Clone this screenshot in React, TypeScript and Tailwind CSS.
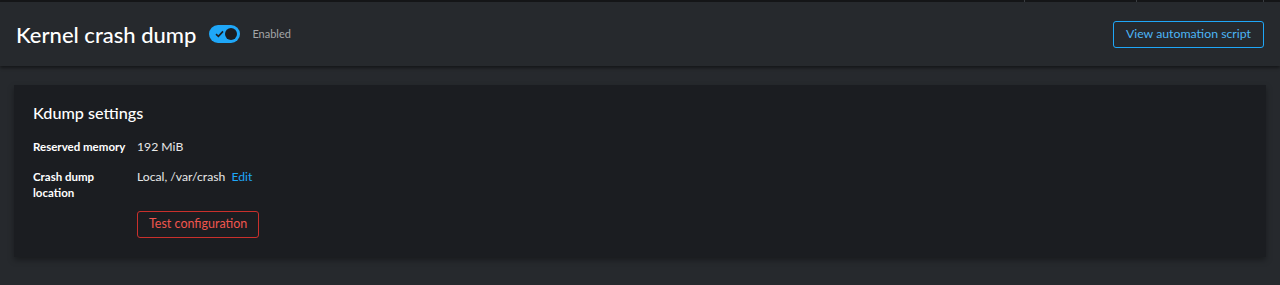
import React from "react";

const font = { fontFamily: 'Lato, "Liberation Sans", sans-serif' };

const Toggle = () => (
  <div className="relative h-[18px] w-[31px] rounded-full bg-[#1fa7f8]">
    <svg className="absolute left-[6px] top-[5px]" width="9" height="8" viewBox="0 0 9 8">
      <path d="M1 4.2 L3.4 6.4 L8 1.4" fill="none" stroke="#1b1d21" strokeWidth="1.6" />
    </svg>
    <div className="absolute right-[3px] top-[3px] h-[12px] w-[12px] rounded-full bg-[#1b1d21]" />
  </div>
);

const TopStrip = () => (
  <div className="flex h-[2px] bg-[#151618]">
    <div className="flex-1" />
    <div className="w-px bg-[#3a3d41]" />
    <div className="w-[111px]" />
    <div className="w-px bg-[#3a3d41]" />
    <div className="w-[126px]" />
    <div className="w-px bg-[#3a3d41]" />
    <div className="w-[16px]" />
  </div>
);

export default function App() {
  return (
    <div className="min-h-[285px] bg-[#26292d] text-white" style={font}>
      <TopStrip />
      <header className="flex h-[64px] items-center justify-between bg-[#26292d] pl-4 pr-4 shadow-[0_2px_3px_rgba(0,0,0,0.45)]">
        <div className="flex items-center">
          <h1 className="text-[22px] font-medium text-white">Kernel crash dump</h1>
          <div className="ml-[13px]">
            <Toggle />
          </div>
          <span className="ml-3 text-[11px] text-[#a4a6a8]">Enabled</span>
        </div>
        <button className="h-[27px] rounded-[3px] border border-[#1fa7f8] px-[12px] text-[12.3px] text-[#4cb5f5]">
          View automation script
        </button>
      </header>
      <main className="px-[14px] pt-[19px] pb-7">
        <section className="bg-[#1b1d21] px-[19px] pt-[16px] pb-[19px] shadow-[0_3px_6px_rgba(0,0,0,0.35)]">
          <h2 className="text-[16.2px] font-medium leading-6 text-white">Kdump settings</h2>
          <dl className="mt-[12px] grid grid-cols-[104px_1fr] gap-y-[12px] text-[12.2px]">
            <dt className="text-[11.5px] font-bold leading-[20px]">Reserved memory</dt>
            <dd className="leading-[20px] text-[#e8e8e8]">192 MiB</dd>
            <dt className="text-[11.5px] font-bold leading-[16px]">
              Crash dump
              <br />
              location
            </dt>
            <dd>
              <div className="leading-[16px] text-[#e8e8e8]">
                Local, /var/crash <span className="ml-[3px] text-[#1fa7f8]">Edit</span>
              </div>
              <button className="mt-[26px] h-[27px] rounded-[3px] border border-[#c9302c] px-[11px] text-[12.5px] text-[#f0554e]">
                Test configuration
              </button>
            </dd>
          </dl>
        </section>
      </main>
    </div>
  );
}
